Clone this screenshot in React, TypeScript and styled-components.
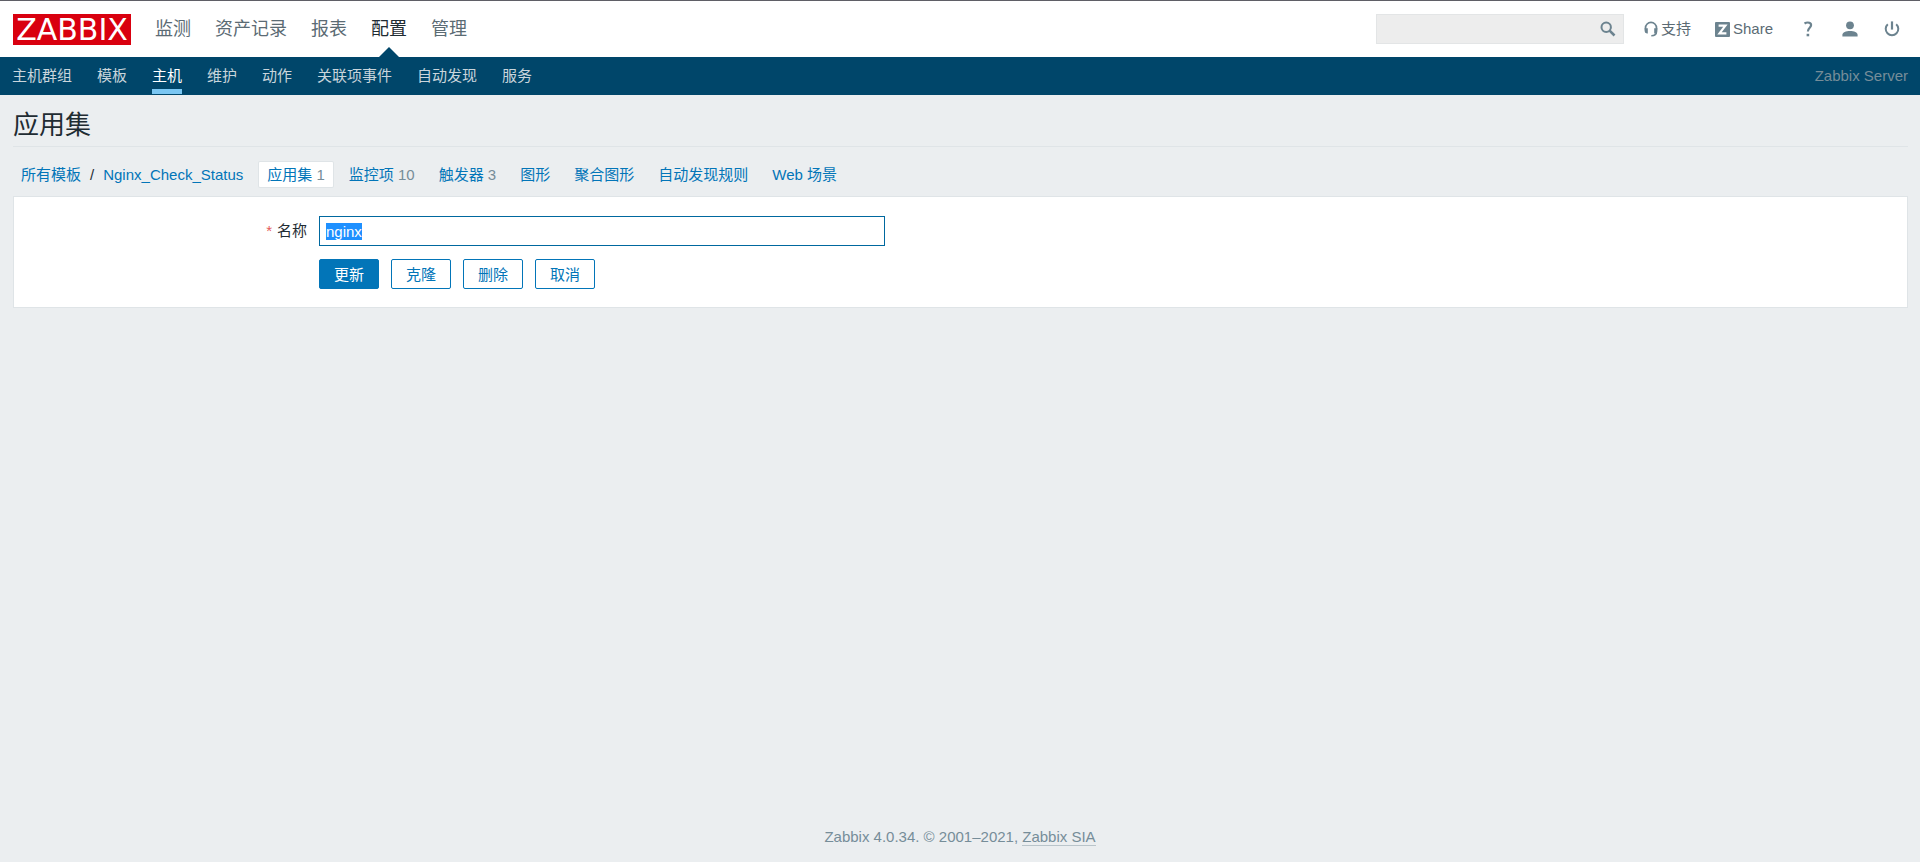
import React, { useEffect, useRef } from "react";
import styled, { createGlobalStyle } from "styled-components";

const GlobalStyle = createGlobalStyle`
  *, *::before, *::after { box-sizing: border-box; }
  body {
    margin: 0;
    background: #ebeef0;
    color: #1f2c33;
    font: 15px/20px "Liberation Sans", "Noto Sans CJK SC", sans-serif;
  }
  a { color: #0275b8; text-decoration: none; }
  ul { list-style: none; margin: 0; padding: 0; }
`;

const Page = styled.div`
  display: flex;
  flex-direction: column;
  min-height: 100vh;
`;

const TopBar = styled.header`
  display: flex;
  align-items: center;
  justify-content: space-between;
  height: 57px;
  padding: 0 12px 0 13px;
  background: #fff;
  border-top: 1px solid #5f5f66;
`;

const TopGroup = styled.div`
  display: flex;
  align-items: center;
  align-self: stretch;
`;

const Logo = styled.a`
  display: flex;
  align-items: center;
  justify-content: center;
  width: 118px;
  height: 31px;
  margin-right: 24px;
  background: #d9000f;
  color: #fff;
  font: 30px/31px "DejaVu Sans", sans-serif;
`;

const MainNav = styled.ul`
  display: flex;
  gap: 24px;
  align-self: stretch;
`;

const MainItem = styled.li<{ $active?: boolean }>`
  position: relative;
  display: flex;
  align-items: center;
  font-size: 18px;
  a { color: ${(p) => (p.$active ? "#1f2c33" : "#5b6b74")}; }
  &::after {
    content: ${(p) => (p.$active ? '""' : "none")};
    position: absolute;
    bottom: 0;
    left: calc(50% - 10px);
    border: 10px solid transparent;
    border-top-width: 0;
    border-bottom-color: #00466a;
  }
`;

const Search = styled.form`
  display: flex;
  width: 248px;
  height: 30px;
  margin-right: 20px;
  background: #ededed;
  border: 1px solid #e3e5e6;
`;

const SearchInput = styled.input`
  flex: 1;
  min-width: 0;
  padding: 0 6px;
  border: 0;
  outline: 0;
  background: transparent;
  font: inherit;
`;

const SearchButton = styled.button`
  display: flex;
  align-items: center;
  padding: 0 7px;
  border: 0;
  background: transparent;
`;

const Tool = styled.a`
  display: flex;
  align-items: center;
  gap: 3px;
  color: #5b6b74;
`;

const ToolLinks = styled.div`
  display: flex;
  gap: 24px;
  margin-right: 27px;
`;

const ToolIcons = styled.div`
  display: flex;
  gap: 26px;
  padding-right: 8px;
`;

const SubBar = styled.nav`
  display: flex;
  justify-content: space-between;
  align-items: center;
  height: 38px;
  padding: 0 12px;
  background: #00466a;
`;

const SubNav = styled.ul`
  display: flex;
  gap: 25px;
  align-self: stretch;
`;

const SubLink = styled.a<{ $active?: boolean }>`
  display: block;
  height: 37px;
  line-height: 37px;
  color: ${(p) => (p.$active ? "#fff" : "#c9d5dc")};
  box-shadow: ${(p) => (p.$active ? "inset 0 -5px #7ac6f2" : "none")};
`;

const ServerName = styled.span`
  color: #768d99;
`;

const Main = styled.main`
  flex: 1;
  padding: 0 12px 0 13px;
`;

const Title = styled.h1`
  margin: 0;
  padding: 15px 0 6px;
  border-bottom: 1px solid #dfe4e7;
  font-size: 26px;
  line-height: 30px;
  font-weight: 400;
`;

const Tabs = styled.ul`
  display: flex;
  align-items: center;
  gap: 8px;
  margin: 15px 0 9px;
`;

const Tab = styled.li<{ $active?: boolean }>`
  display: flex;
  height: 25px;
  padding: 0 8px;
  line-height: 25px;
  white-space: pre;
  color: #768d99;
  border-radius: 1px;
  background: ${(p) => (p.$active ? "#fff" : "transparent")};
  box-shadow: ${(p) => (p.$active ? "0 0 0 1px #dfe4e7" : "none")};
`;

const Slash = styled.span`
  padding: 0 9px;
  color: #1f2c33;
`;

const Panel = styled.form`
  display: grid;
  grid-template-columns: 293px minmax(0, 566px);
  gap: 13px 12px;
  padding: 19px 0 18px;
  background: #fff;
  border: 1px solid #dfe4e7;
`;

const Label = styled.label`
  text-align: right;
  line-height: 30px;
  &::before {
    content: "*";
    margin-right: 5px;
    color: #e45959;
  }
`;

const NameInput = styled.input`
  width: 100%;
  height: 30px;
  padding: 0 6px;
  border: 1px solid #00689f;
  outline: 0;
  color: #1f2c33;
  font: 15px "Liberation Sans", "Noto Sans CJK SC", sans-serif;
  &::selection { background: #1e90ff; color: #fff; }
`;

const Actions = styled.div`
  grid-column: 2;
  display: flex;
  gap: 12px;
`;

const Button = styled.button<{ $primary?: boolean }>`
  width: 60px;
  height: 30px;
  padding: 2px 0 0;
  border: 1px solid #0275b8;
  border-radius: 2px;
  background: ${(p) => (p.$primary ? "#0275b8" : "#fff")};
  color: ${(p) => (p.$primary ? "#fff" : "#0275b8")};
  font: inherit;
`;

const Footer = styled.footer`
  padding: 15px 0;
  text-align: center;
  color: #768d99;
  a {
    color: inherit;
    border-bottom: 1px solid #b9c4ca;
  }
`;

const ink = "#6c838f";

const SearchIcon = () => (
  <svg width="16" height="16" viewBox="0 0 16 16" fill="none" stroke={ink}>
    <circle cx="6.2" cy="6.2" r="4.7" strokeWidth="2" />
    <path d="M9.6 9.6l4.9 4.9" strokeWidth="2.6" />
  </svg>
);

const HeadsetIcon = () => (
  <svg width="14" height="16" viewBox="0 0 14 16" fill="none" stroke={ink}>
    <path d="M1.5 8.500V6.900a5.500 5.500 0 0 1 11 0V8.500" strokeWidth="1.700" />
    <path d="M.6 7.200h3.200v5.200H3A2.400 2.400 0 0 1 .6 10zM13.400 7.200h-3.200v5.200h.8a2.400 2.400 0 0 0 2.400-2.400z" fill={ink} stroke="none" />
    <path d="M12.500 10.500c0 3-1.500 4.200-5.200 4.200" strokeWidth="1.600" />
  </svg>
);

const ShareIcon = () => (
  <svg width="15" height="15" viewBox="0 0 15 15">
    <rect width="15" height="15" rx="1" fill={ink} />
    <path d="M3.600 3.600h6.800L4.500 11.400H11.400" fill="none" stroke="#fff" strokeWidth="2.200" />
  </svg>
);

const HelpIcon = () => (
  <svg width="16" height="16" viewBox="0 0 16 16" fill="none" stroke={ink} strokeWidth="2.200">
    <path d="M4.500 2.500C5.600 1.800 6.700 1.500 7.800 1.500c2.100 0 3.300.9 3.300 2.600C11.100 6.900 7.900 6.700 7.900 10.600" />
    <path d="M7.900 12.800v2.500" strokeWidth="2.600" />
  </svg>
);

const UserIcon = () => (
  <svg width="16" height="16" viewBox="0 0 16 16" fill={ink}>
    <circle cx="8" cy="4.300" r="3.900" />
    <path d="M.4 15.600v-1.900C.4 11.400 4 10 8 10s7.600 1.400 7.600 3.700v1.900z" />
  </svg>
);

const PowerIcon = () => (
  <svg width="16" height="16" viewBox="0 0 16 16" fill="none" stroke={ink} strokeWidth="2">
    <path d="M3.800 3.200a6.300 6.300 0 1 0 8.400 0" />
    <path d="M8 .4v8.200" strokeWidth="2.200" />
  </svg>
);

const mainItems = ["监测", "资产记录", "报表", "配置", "管理"];
const subItems = ["主机群组", "模板", "主机", "维护", "动作", "关联项事件", "自动发现", "服务"];
const tabs: { label: string; count?: number }[] = [
  { label: "应用集", count: 1 },
  { label: "监控项", count: 10 },
  { label: "触发器", count: 3 },
  { label: "图形" },
  { label: "聚合图形" },
  { label: "自动发现规则" },
  { label: "Web 场景" },
];

export default function App() {
  const nameRef = useRef<HTMLInputElement>(null);

  useEffect(() => {
    nameRef.current?.focus();
    nameRef.current?.select();
  }, []);

  return (
    <Page>
      <GlobalStyle />
      <TopBar>
        <TopGroup>
          <Logo href="#">ZABBIX</Logo>
          <MainNav>
            {mainItems.map((item) => (
              <MainItem key={item} $active={item === "配置"}>
                <a href="#">{item}</a>
              </MainItem>
            ))}
          </MainNav>
        </TopGroup>
        <TopGroup>
          <Search role="search">
            <SearchInput type="text" aria-label="搜索" />
            <SearchButton type="button" aria-label="搜索"><SearchIcon /></SearchButton>
          </Search>
          <ToolLinks>
            <Tool href="#"><HeadsetIcon />支持</Tool>
            <Tool href="#"><ShareIcon />Share</Tool>
          </ToolLinks>
          <ToolIcons>
            <Tool href="#" aria-label="帮助"><HelpIcon /></Tool>
            <Tool href="#" aria-label="用户"><UserIcon /></Tool>
            <Tool href="#" aria-label="退出"><PowerIcon /></Tool>
          </ToolIcons>
        </TopGroup>
      </TopBar>
      <SubBar>
        <SubNav>
          {subItems.map((item) => (
            <li key={item}>
              <SubLink href="#" $active={item === "主机"}>{item}</SubLink>
            </li>
          ))}
        </SubNav>
        <ServerName>Zabbix Server</ServerName>
      </SubBar>
      <Main>
        <Title>应用集</Title>
        <Tabs>
          <Tab>
            <a href="#">所有模板</a>
            <Slash>/</Slash>
            <a href="#">Nginx_Check_Status</a>
          </Tab>
          {tabs.map((tab, i) => (
            <Tab key={tab.label} $active={i === 0}>
              <a href="#">{tab.label}</a>
              {tab.count !== undefined && <span> {tab.count}</span>}
            </Tab>
          ))}
        </Tabs>
        <Panel>
          <Label htmlFor="name">名称</Label>
          <NameInput id="name" ref={nameRef} type="text" defaultValue="nginx" required />
          <Actions>
            <Button type="button" $primary>更新</Button>
            <Button type="button">克隆</Button>
            <Button type="button">删除</Button>
            <Button type="button">取消</Button>
          </Actions>
        </Panel>
      </Main>
      <Footer>
        Zabbix 4.0.34. © 2001–2021, <a href="#">Zabbix SIA</a>
      </Footer>
    </Page>
  );
}
